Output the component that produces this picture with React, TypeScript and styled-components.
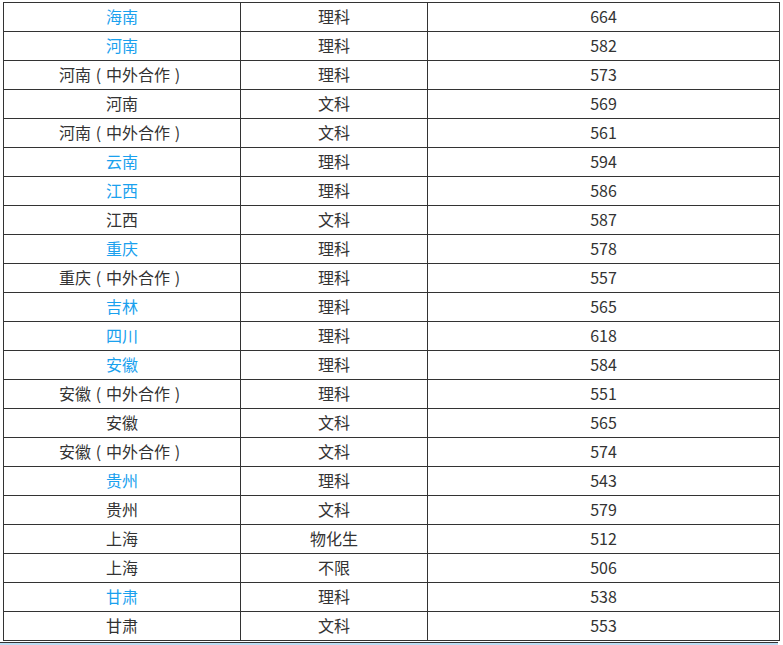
import styled, { createGlobalStyle } from 'styled-components';

const GlobalStyle = createGlobalStyle`
  html, body {
    margin: 0;
    padding: 0;
    background: #ffffff;
  }
`;

const Page = styled.div`
  padding-top: 2px;
  padding-left: 3px;
  font-family: "Noto Sans CJK SC", "Microsoft YaHei", sans-serif;
`;

const Table = styled.table`
  border-collapse: collapse;
  width: 776px;
  table-layout: fixed;
  color: #333333;
  font-size: 16px;
`;

const Row = styled.tr`
  height: 29px;
`;

const Cell = styled.td<{ $link?: boolean }>`
  border: 1px solid #333333;
  padding: 0 0 2px;
  text-align: center;
  vertical-align: middle;
  line-height: 20px;
  white-space: nowrap;
  color: ${(p) => (p.$link ? '#1aa1ee' : '#333333')};
`;

const Paren = styled.span`
  display: inline-block;
  width: 15px;
  text-align: center;
`;

const Strip = styled.div`
  margin-top: 1px;
  width: 778px;
  height: 3px;
  margin-left: -3px;
  border-top: 1px solid #333333;
  background: #bcdcf2;
`;

type Entry = [string, boolean, string, number, boolean];

const rows: Entry[] = [
  ['海南', false, '理科', 664, true],
  ['河南', false, '理科', 582, true],
  ['河南', true, '理科', 573, false],
  ['河南', false, '文科', 569, false],
  ['河南', true, '文科', 561, false],
  ['云南', false, '理科', 594, true],
  ['江西', false, '理科', 586, true],
  ['江西', false, '文科', 587, false],
  ['重庆', false, '理科', 578, true],
  ['重庆', true, '理科', 557, false],
  ['吉林', false, '理科', 565, true],
  ['四川', false, '理科', 618, true],
  ['安徽', false, '理科', 584, true],
  ['安徽', true, '理科', 551, false],
  ['安徽', false, '文科', 565, false],
  ['安徽', true, '文科', 574, false],
  ['贵州', false, '理科', 543, true],
  ['贵州', false, '文科', 579, false],
  ['上海', false, '物化生', 512, false],
  ['上海', false, '不限', 506, false],
  ['甘肃', false, '理科', 538, true],
  ['甘肃', false, '文科', 553, false],
];

export default function App() {
  return (
    <>
      <GlobalStyle />
      <Page>
        <Table>
          <colgroup>
            <col style={{ width: 237 }} />
            <col style={{ width: 187 }} />
            <col style={{ width: 352 }} />
          </colgroup>
          <tbody>
            {rows.map(([region, joint, subject, score, link], i) => (
              <Row key={i}>
                <Cell $link={link}>
                  {region}
                  {joint && (
                    <>
                      <Paren>(</Paren>中外合作<Paren>)</Paren>
                    </>
                  )}
                </Cell>
                <Cell>{subject}</Cell>
                <Cell>{score}</Cell>
              </Row>
            ))}
          </tbody>
        </Table>
        <Strip />
      </Page>
    </>
  );
}
